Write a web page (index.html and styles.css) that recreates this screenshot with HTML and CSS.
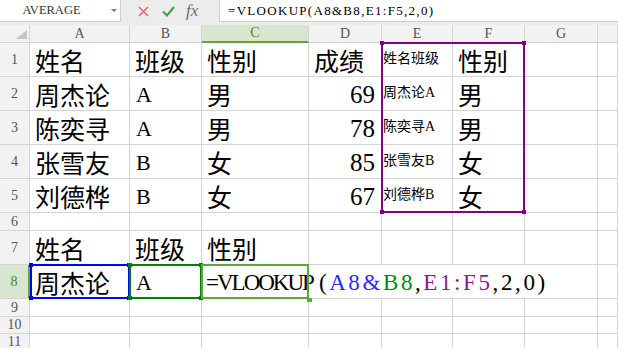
FILE: index.html
```html
<!DOCTYPE html>
<html>
<head>
  <title>VLOOKUP</title>
  <link rel="stylesheet" href="styles.css">
</head>
<body>
  <div class="toolbar">
    <div class="namebox">
      <span class="name">AVERAGE</span>
      <span class="drop"></span>
    </div>
    <div class="tools">
      <svg class="cancel" width="11" height="11" viewBox="0 0 11 11"><path d="M1 1L10 10M10 1L1 10" stroke="#e26a6a" stroke-width="1.6" fill="none"/></svg>
      <svg class="ok" width="13" height="11" viewBox="0 0 13 11"><path d="M1 5.5L5 9.5L12 1" stroke="#3e9e3e" stroke-width="2" fill="none"/></svg>
      <span class="fx">fx</span>
    </div>
    <div class="formula">=VLOOKUP(A8&amp;B8,E1:F5,2,0)</div>
  </div>

  <div class="sheet">
    <div class="grid">
      <!-- column headers -->
      <div class="c hd corner"><span class="tri"></span></div>
      <div class="c hd">A</div>
      <div class="c hd">B</div>
      <div class="c hd on">C</div>
      <div class="c hd">D</div>
      <div class="c hd">E</div>
      <div class="c hd">F</div>
      <div class="c hd">G</div>
      <div class="c hd"></div>

      <!-- row 1 -->
      <div class="c rh">1</div>
      <div class="c">姓名</div>
      <div class="c">班级</div>
      <div class="c">性别</div>
      <div class="c">成绩</div>
      <div class="c sm">姓名班级</div>
      <div class="c">性别</div>
      <div class="c"></div>
      <div class="c"></div>

      <!-- row 2 -->
      <div class="c rh">2</div>
      <div class="c">周杰论</div>
      <div class="c lat">A</div>
      <div class="c">男</div>
      <div class="c num">69</div>
      <div class="c sm">周杰论A</div>
      <div class="c">男</div>
      <div class="c"></div>
      <div class="c"></div>

      <!-- row 3 -->
      <div class="c rh">3</div>
      <div class="c">陈奕寻</div>
      <div class="c lat">A</div>
      <div class="c">男</div>
      <div class="c num">78</div>
      <div class="c sm">陈奕寻A</div>
      <div class="c">男</div>
      <div class="c"></div>
      <div class="c"></div>

      <!-- row 4 -->
      <div class="c rh">4</div>
      <div class="c">张雪友</div>
      <div class="c lat">B</div>
      <div class="c">女</div>
      <div class="c num">85</div>
      <div class="c sm">张雪友B</div>
      <div class="c">女</div>
      <div class="c"></div>
      <div class="c"></div>

      <!-- row 5 -->
      <div class="c rh">5</div>
      <div class="c">刘德桦</div>
      <div class="c lat">B</div>
      <div class="c">女</div>
      <div class="c num">67</div>
      <div class="c sm">刘德桦B</div>
      <div class="c">女</div>
      <div class="c"></div>
      <div class="c"></div>

      <!-- row 6 -->
      <div class="c rh">6</div>
      <div class="c"></div>
      <div class="c"></div>
      <div class="c"></div>
      <div class="c"></div>
      <div class="c"></div>
      <div class="c"></div>
      <div class="c"></div>
      <div class="c"></div>

      <!-- row 7 -->
      <div class="c rh">7</div>
      <div class="c">姓名</div>
      <div class="c">班级</div>
      <div class="c">性别</div>
      <div class="c"></div>
      <div class="c"></div>
      <div class="c"></div>
      <div class="c"></div>
      <div class="c"></div>

      <!-- row 8, the formula runs over D:G -->
      <div class="c rh on">8</div>
      <div class="c">周杰论</div>
      <div class="c lat">A</div>
      <div class="c expr"><span class="fn">=VLOOKUP</span><span class="args">(<span class="ref-a">A8&amp;</span><span class="ref-b">B8</span>,<span class="ref-e">E1:F5</span>,2,0)</span></div>
      <div class="c"></div>

      <!-- rows 9 - 11 -->
      <div class="c rh">9</div>
      <div class="c"></div>
      <div class="c"></div>
      <div class="c"></div>
      <div class="c"></div>
      <div class="c"></div>
      <div class="c"></div>
      <div class="c"></div>
      <div class="c"></div>

      <div class="c rh">10</div>
      <div class="c"></div>
      <div class="c"></div>
      <div class="c"></div>
      <div class="c"></div>
      <div class="c"></div>
      <div class="c"></div>
      <div class="c"></div>
      <div class="c"></div>

      <div class="c rh">11</div>
      <div class="c"></div>
      <div class="c"></div>
      <div class="c"></div>
      <div class="c"></div>
      <div class="c"></div>
      <div class="c"></div>
      <div class="c"></div>
      <div class="c"></div>
    </div>

    <!-- reference highlights drawn over the cells -->
    <div class="marks">
      <div class="sel sel-a"><i class="tl"></i><i class="tr"></i><i class="bl"></i><i class="br"></i></div>
      <div class="sel sel-b"><i class="tl"></i><i class="tr"></i><i class="bl"></i><i class="br"></i></div>
      <div class="sel sel-c"><i class="handle"></i></div>
      <div class="sel sel-e"><i class="tl"></i><i class="tr"></i><i class="bl"></i><i class="br"></i></div>
    </div>
  </div>
</body>
</html>
```

FILE: styles.css
```css
body {
  margin: 0;
  width: 618px;
  height: 348px;
  overflow: hidden;
  background-color: #fff;
  font-family: "Liberation Serif", "Noto Sans CJK SC", serif;
  color: #000;
}

/* formula bar */
.toolbar {
  display: flex;
  height: 22px;
  padding-bottom: 3px;
  background-color: #ececec;
}

.namebox {
  width: 120px;
  display: flex;
  align-items: center;
  background-color: #fff;
  border-right: 1px solid #cfcfcf;
  border-bottom: 1px solid #cfcfcf;
}

.name {
  flex-grow: 1;
  text-align: center;
  font-size: 12.5px;
  color: #333;
  padding-right: 8px;
}

.drop {
  width: 0;
  height: 0;
  margin-right: 3px;
  border-left: 3px solid transparent;
  border-right: 3px solid transparent;
  border-top: 3px solid #777;
}

.tools {
  width: 98px;
  display: flex;
  align-items: center;
  padding-left: 17px;
  box-sizing: border-box;
}

.ok {
  margin-left: 13px;
}

.fx {
  margin-left: 11px;
  font-style: italic;
  font-size: 17px;
  color: #707070;
}

.formula {
  flex-grow: 1;
  padding-left: 8px;
  background-color: #fff;
  border-left: 1px solid #cfcfcf;
  border-bottom: 1px solid #cfcfcf;
  font-size: 13px;
  letter-spacing: 1.3px;
  line-height: 22px;
  white-space: nowrap;
}

/* sheet */
.sheet {
  position: relative;
}

.grid,
.marks {
  display: grid;
  grid-template-columns: 30px 100px 72px 107px 73px 71px 72px 73px 1fr;
  grid-template-rows: 18px 34px 34px 34px 34px 34px 18px 34px 34px 18px 17px 17px;
}

.c {
  display: flex;
  align-items: flex-end;
  min-width: 0;
  padding: 0 4px 1px 5px;
  box-sizing: border-box;
  border-right: 1px solid #d4d4d4;
  border-bottom: 1px solid #d4d4d4;
  font-size: 25px;
  line-height: 25px;
  white-space: nowrap;
}

.hd,
.rh {
  align-items: center;
  justify-content: center;
  padding: 0;
  background-color: #f2f2f2;
  font-size: 14px;
  line-height: 16px;
  color: #555;
}

.hd.on {
  background-color: #d8e5cf;
  color: #3e8c22;
  border-bottom: 2px solid #5ea53b;
}

.rh.on {
  background-color: #d8e5cf;
  color: #3e8c22;
  border-right: 2px solid #5ea53b;
}

.corner {
  align-items: flex-end;
  justify-content: flex-end;
  padding: 0 2px 3px 0;
}

.tri {
  width: 0;
  height: 0;
  border-left: 11px solid transparent;
  border-bottom: 9px solid #c6c6c6;
}

.sm {
  align-items: center;
  padding-left: 1px;
  font-size: 14px;
  line-height: 16px;
}

.lat {
  font-size: 22px;
  padding-left: 6px;
  padding-bottom: 3px;
}

.num {
  justify-content: flex-end;
  padding-right: 6px;
  padding-bottom: 3px;
}

.expr {
  grid-column: span 5;
  padding-left: 4px;
  padding-bottom: 3px;
  font-size: 23px;
}

.fn {
  letter-spacing: -2px;
}

.args {
  margin-left: 6px;
  letter-spacing: 2.6px;
}

.ref-a {
  color: #2b2bff;
}

.ref-b {
  color: #008a00;
}

.ref-e {
  color: #8a1a8a;
}

/* selection frames */
.marks {
  position: absolute;
  top: 0;
  left: 0;
  right: 0;
  bottom: 0;
  pointer-events: none;
}

.sel {
  position: relative;
  margin-top: -1px;
  border: 2px solid;
}

.sel i {
  position: absolute;
  width: 4px;
  height: 4px;
  background-color: currentColor;
}

.sel .tl { left: -3px; top: -3px; }
.sel .tr { right: -3px; top: -3px; }
.sel .bl { left: -3px; bottom: -3px; }
.sel .br { right: -3px; bottom: -3px; }

.sel-a {
  grid-row: 9;
  grid-column: 2;
  color: #0000ff;
}

.sel-b {
  grid-row: 9;
  grid-column: 3;
  margin-left: -1px;
  color: #008000;
}

.sel-c {
  grid-row: 9;
  grid-column: 4;
  margin-left: -1px;
  color: #5ea53b;
}

.sel-c .handle {
  right: -5px;
  bottom: -5px;
  width: 5px;
  height: 4px;
}

.sel-e {
  grid-row: 2 / 7;
  grid-column: 6 / 8;
  margin-left: -1px;
  color: #800080;
}
```
